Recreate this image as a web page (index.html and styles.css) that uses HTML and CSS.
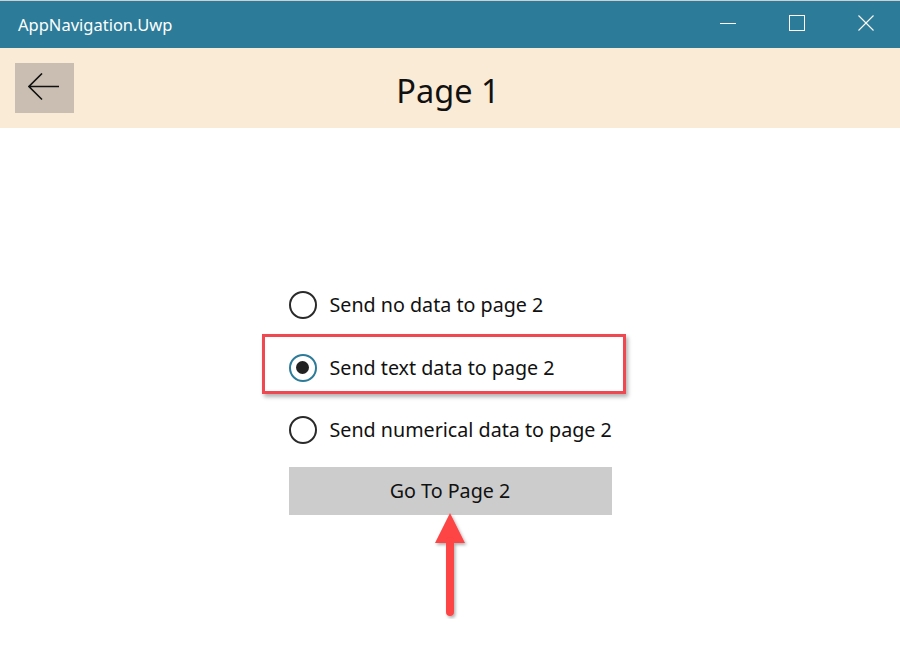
FILE: index.html
```html
<!DOCTYPE html>
<html>
<head>
<meta charset="utf-8">
<link rel="stylesheet" href="styles.css">
</head>
<body>
<div class="window">
  <div class="titlebar">
    <div class="app-title">AppNavigation.Uwp</div>
    <div class="controls">
      <div class="ctl"><svg width="16" height="16" viewBox="0 0 16 16"><line x1="0" y1="8.5" x2="16" y2="8.5" stroke="#fff" stroke-width="1"/></svg></div>
      <div class="ctl"><svg width="16" height="16" viewBox="0 0 16 16"><rect x="0.5" y="0.5" width="15" height="15" fill="none" stroke="#fff" stroke-width="1"/></svg></div>
      <div class="ctl"><svg width="16" height="16" viewBox="0 0 16 16"><path d="M0.5 0.5 L15.5 15.5 M15.5 0.5 L0.5 15.5" stroke="#fff" stroke-width="1.1"/></svg></div>
    </div>
  </div>
  <div class="header">
    <div class="back">
      <svg width="32" height="30" viewBox="0 0 32 30"><path d="M1 13.5 H31 M14 0.5 L1 13.5 L14 26.5" fill="none" stroke="#111" stroke-width="1.6" stroke-linejoin="miter"/></svg>
    </div>
    <div class="page-title">Page 1</div>
    <div class="spacer"></div>
  </div>
  <div class="main">
    <div class="panel">
      <div class="row">
        <span class="radio"></span><span class="label">Send no data to page 2</span>
      </div>
      <div class="row">
        <span class="radio checked"></span><span class="label">Send text data to page 2</span>
        <div class="highlight"></div>
      </div>
      <div class="row">
        <span class="radio"></span><span class="label">Send numerical data to page 2</span>
      </div>
      <div class="btn-wrap">
        <div class="btn">Go To Page 2</div>
        <svg class="arrow" width="40" height="106" viewBox="0 0 40 106">
          <defs>
            <filter id="sh" x="-50%" y="-20%" width="200%" height="140%">
              <feDropShadow dx="1.5" dy="2" stdDeviation="1.5" flood-color="#000" flood-opacity="0.3"/>
            </filter>
          </defs>
          <g filter="url(#sh)">
            <polygon points="20,0 35,30 5,30" fill="#fe4444"/>
            <line x1="20" y1="28" x2="20" y2="99" stroke="#fe4444" stroke-width="8" stroke-linecap="round"/>
          </g>
        </svg>
      </div>
    </div>
  </div>
</div>
</body>
</html>
```

FILE: styles.css
```css
* { box-sizing: border-box; }
html, body { margin: 0; padding: 0; }
body {
  width: 900px;
  height: 666px;
  background: #ffffff;
  font-family: "Noto Sans", "Open Sans", sans-serif;
  color: #111;
  overflow: hidden;
}
.window { display: flex; flex-direction: column; height: 666px; }
.titlebar {
  height: 48px;
  border-top: 1px solid #cfcfcf;
  background: #2c7b99;
  display: flex;
  align-items: center;
  color: #fff;
}
.app-title {
  padding-left: 18px;
  font-size: 16.5px;
  flex: 1;
  padding-bottom: 1px;
}
.controls { display: flex; height: 100%; }
.ctl {
  width: 69px;
  display: flex;
  align-items: center;
  justify-content: center;
  padding-bottom: 3px;
}
.ctl svg { display: block; }
.header {
  height: 80px;
  background: #faebd7;
  display: grid;
  grid-template-columns: 1fr auto 1fr;
  align-items: center;
}
.back {
  margin-left: 15px;
  width: 59px;
  height: 50px;
  background: #c9beb1;
  display: flex;
  align-items: center;
  justify-content: center;
  margin-top: -1px;
}
.back svg { display: block; margin-left: -1px; }
.page-title {
  font-size: 32.5px;
  color: #111;
  margin-left: -4px;
  padding-top: 5px;
}
.main {
  flex: 1;
  display: flex;
  justify-content: center;
  padding-top: 157px;
}
.panel {
  width: 323px;
  display: flex;
  flex-direction: column;
  gap: 22.5px;
}
.row {
  position: relative;
  height: 40px;
  display: flex;
  align-items: center;
  gap: 13px;
}
.radio {
  width: 28px;
  height: 28px;
  border-radius: 50%;
  border: 2.8px solid #2a2a2a;
  display: flex;
  align-items: center;
  justify-content: center;
  flex: none;
}
.radio.checked { border-color: #2c7b99; }
.radio.checked::after {
  content: "";
  width: 13px;
  height: 13px;
  border-radius: 50%;
  background: #222;
}
.label {
  font-size: 19.7px;
  white-space: nowrap;
  color: #111;
  padding-bottom: 1px;
}
.highlight {
  position: absolute;
  left: -27px;
  top: -14px;
  width: 364px;
  height: 60px;
  border: 3px solid #f04850;
  box-shadow: 2px 3px 4px rgba(0,0,0,0.3);
  pointer-events: none;
}
.btn-wrap {
  position: relative;
  margin-top: -5.5px;
}
.btn {
  height: 48px;
  background: #cccccc;
  display: flex;
  align-items: center;
  justify-content: center;
  font-size: 19.7px;
  color: #111;
  padding-bottom: 2px;
}
.arrow {
  position: absolute;
  left: 141px;
  top: 46px;
}
```
